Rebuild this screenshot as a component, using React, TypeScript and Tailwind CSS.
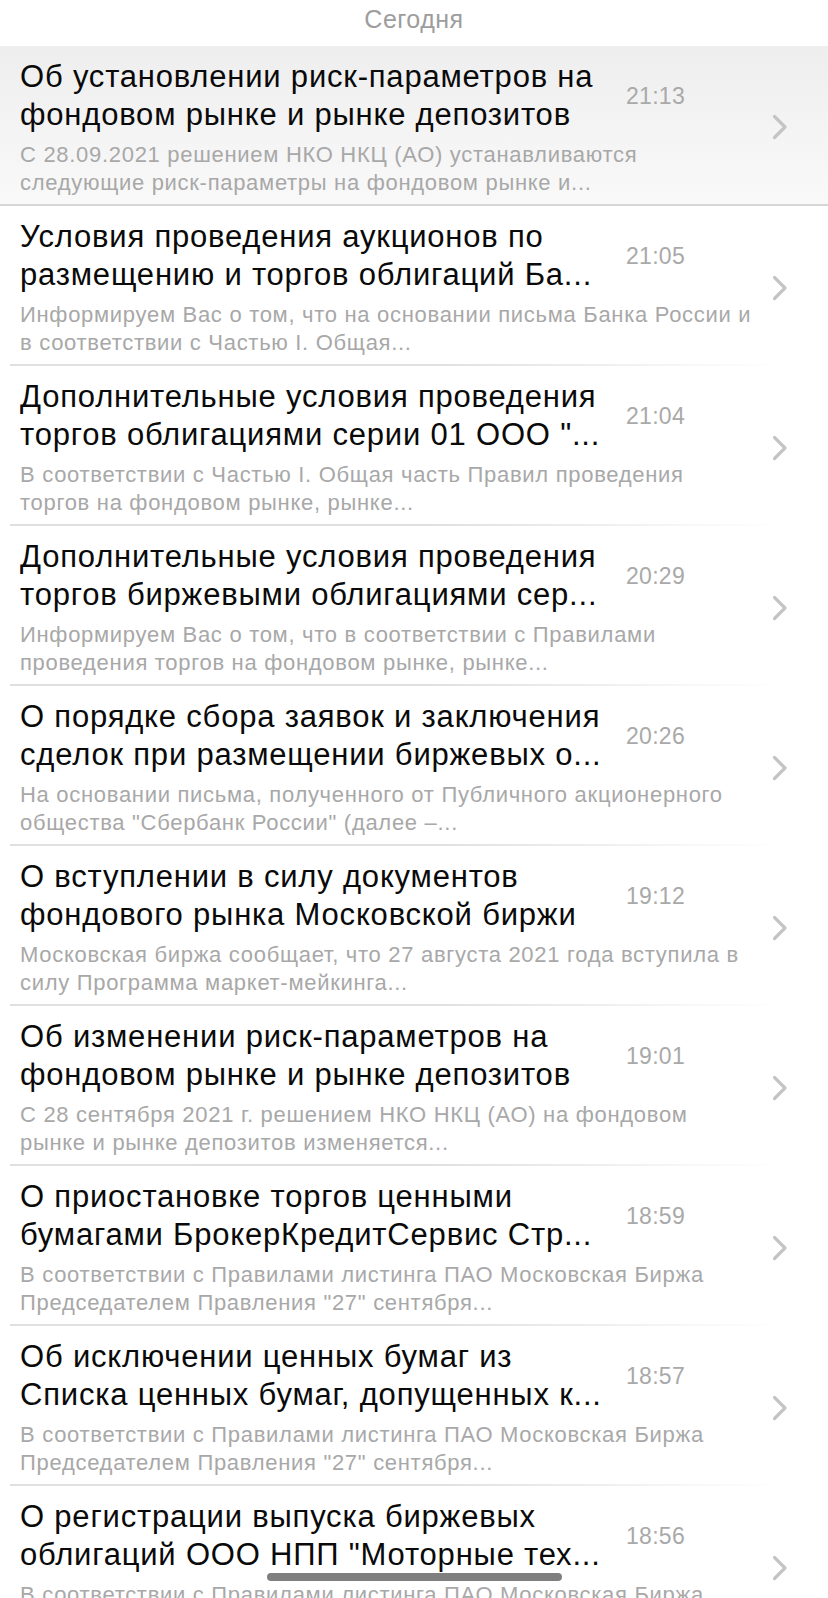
type NewsItem = {
  title: string[]
  time: string
  text: string[]
}

const news: NewsItem[] = [
  {
    title: ['Об установлении риск-параметров на', 'фондовом рынке и рынке депозитов'],
    time: '21:13',
    text: ['С 28.09.2021 решением НКО НКЦ (АО) устанавливаются', 'следующие риск-параметры на фондовом рынке и...'],
  },
  {
    title: ['Условия проведения аукционов по', 'размещению и торгов облигаций Ба...'],
    time: '21:05',
    text: ['Информируем Вас о том, что на основании письма Банка России и', 'в соответствии с Частью I. Общая...'],
  },
  {
    title: ['Дополнительные условия проведения', 'торгов облигациями серии 01 ООО "...'],
    time: '21:04',
    text: ['В соответствии с Частью I. Общая часть Правил проведения', 'торгов на фондовом рынке, рынке...'],
  },
  {
    title: ['Дополнительные условия проведения', 'торгов биржевыми облигациями сер...'],
    time: '20:29',
    text: ['Информируем Вас о том, что в соответствии с Правилами', 'проведения торгов на фондовом рынке, рынке...'],
  },
  {
    title: ['О порядке сбора заявок и заключения', 'сделок при размещении биржевых о...'],
    time: '20:26',
    text: ['На основании письма, полученного от Публичного акционерного', 'общества "Сбербанк России" (далее –...'],
  },
  {
    title: ['О вступлении в силу документов', 'фондового рынка Московской биржи'],
    time: '19:12',
    text: ['Московская биржа сообщает, что 27 августа 2021 года вступила в', 'силу Программа маркет-мейкинга...'],
  },
  {
    title: ['Об изменении риск-параметров на', 'фондовом рынке и рынке депозитов'],
    time: '19:01',
    text: ['С 28 сентября 2021 г. решением НКО НКЦ (АО) на фондовом', 'рынке и рынке депозитов изменяется...'],
  },
  {
    title: ['О приостановке торгов ценными', 'бумагами БрокерКредитСервис Стр...'],
    time: '18:59',
    text: ['В соответствии с Правилами листинга ПАО Московская Биржа', 'Председателем Правления "27" сентября...'],
  },
  {
    title: ['Об исключении ценных бумаг из', 'Списка ценных бумаг, допущенных к...'],
    time: '18:57',
    text: ['В соответствии с Правилами листинга ПАО Московская Биржа', 'Председателем Правления "27" сентября...'],
  },
  {
    title: ['О регистрации выпуска биржевых', 'облигаций ООО НПП "Моторные тех...'],
    time: '18:56',
    text: ['В соответствии с Правилами листинга ПАО Московская Биржа', 'Председателем Правления "27" сентября...'],
  },
]

const Chevron = () => (
  <svg width="16" height="26" viewBox="0 0 16 26" fill="none">
    <polyline points="2.5,2.5 13,13 2.5,23.5" stroke="#c4c4c4" strokeWidth="3.2" strokeLinecap="round" strokeLinejoin="round" />
  </svg>
)

const NewsRow = ({ item, active }: { item: NewsItem; active: boolean }) => {
  return (
    <div
      className={
        active
          ? 'relative flex h-[160px] items-center bg-gradient-to-b from-[#eeeeee] to-[#f9f9f9] border-b-2 border-[#d6d6d6]'
          : 'relative flex h-[160px] items-center'
      }
    >
      <div className="flex-1 min-w-0 pl-5 pt-[12px] pb-[10px] self-start">
        <div className="flex items-center">
          <div className="w-[606px] text-[31px] leading-[38px] text-[#0a0a0a] whitespace-nowrap tracking-[0.8px]">
            {item.title.map((line) => (
              <div key={line}>{line}</div>
            ))}
          </div>
          <div className="text-[23px] text-[#a9a9a9] tracking-[0.3px]">{item.time}</div>
        </div>
        <div className="mt-[7px] text-[22px] leading-[27.5px] text-[#a8a8a8] whitespace-nowrap tracking-[0.7px]">
          {item.text.map((line) => (
            <div key={line}>{line}</div>
          ))}
        </div>
      </div>
      <div className="w-[56px] shrink-0 flex justify-start pt-[4px]">
        <Chevron />
      </div>
      {!active && (
        <div className="absolute bottom-0 left-[10px] w-[770px] h-[2px] bg-gradient-to-r from-[#e0e0e0] from-55% to-white" />
      )}
    </div>
  )
}

export default function App() {
  return (
    <div
      className="relative h-[1598px] w-[828px] overflow-hidden bg-white"
      style={{ fontFamily: '"Liberation Sans", Arial, sans-serif' }}
    >
      <div className="h-[46px] flex items-center justify-center pb-[6px] text-[25px] text-[#9d9d9d] tracking-[0.5px]">
        Сегодня
      </div>
      {news.map((item, i) => (
        <NewsRow key={item.time} item={item} active={i === 0} />
      ))}
      <div className="absolute bottom-[17px] left-[267px] w-[295px] h-[8px] rounded-full bg-[#7f7f7f]" />
    </div>
  )
}
